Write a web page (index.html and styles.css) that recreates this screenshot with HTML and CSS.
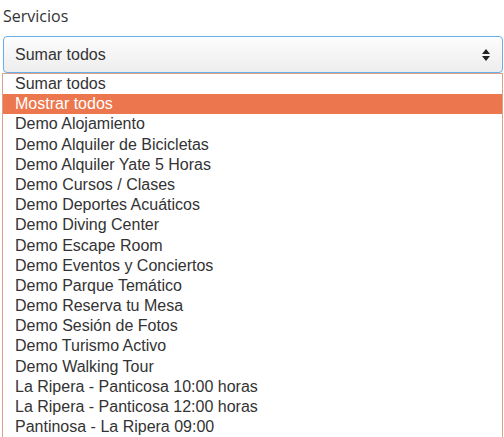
FILE: index.html
```html
<!DOCTYPE html>
<html lang="es">
<head>
<meta charset="utf-8">
<title>Servicios</title>
<link rel="stylesheet" href="styles.css">
</head>
<body>
<div class="field">
  <label class="label">Servicios</label>
  <div class="select">
    <span class="value">Sumar todos</span>
    <svg class="arrows" width="8" height="12" viewBox="0 0 8 12"><path d="M4 0 L8 5 H0 Z M0 7 H8 L4 12 Z" fill="#222"/></svg>
  </div>
  <ul class="options">
    <li>Sumar todos</li>
    <li class="active">Mostrar todos</li>
    <li>Demo Alojamiento</li>
    <li>Demo Alquiler de Bicicletas</li>
    <li>Demo Alquiler Yate 5 Horas</li>
    <li>Demo Cursos / Clases</li>
    <li>Demo Deportes Acuáticos</li>
    <li>Demo Diving Center</li>
    <li>Demo Escape Room</li>
    <li>Demo Eventos y Conciertos</li>
    <li>Demo Parque Temático</li>
    <li>Demo Reserva tu Mesa</li>
    <li>Demo Sesión de Fotos</li>
    <li>Demo Turismo Activo</li>
    <li>Demo Walking Tour</li>
    <li>La Ripera - Panticosa 10:00 horas</li>
    <li>La Ripera - Panticosa 12:00 horas</li>
    <li>Pantinosa - La Ripera 09:00</li>
  </ul>
</div>
</body>
</html>
```
FILE: styles.css
```css
html, body {
  margin: 0;
  padding: 0;
  background: #fff;
  overflow: hidden;
}
.field {
  padding: 0 1px 0 2px;
  width: 501px;
}
.label {
  display: block;
  font-family: "Open Sans", sans-serif;
  font-size: 16px;
  line-height: 20px;
  color: #333;
  padding: 6px 0 0 1px;
  height: 30px;
}
.select {
  box-sizing: border-box;
  margin-left: 1px;
  width: 500px;
  height: 37px;
  border: 1px solid #66afe9;
  border-radius: 4px;
  background: linear-gradient(#fdfdfd, #ededed);
  display: flex;
  align-items: center;
  justify-content: space-between;
  padding: 0 12px 0 11px;
  font-family: "Liberation Sans", Arial, sans-serif;
  font-size: 16px;
  color: #333;
}
.value {
  padding-top: 1px;
}
.arrows {
  display: block;
}
.options {
  list-style: none;
  margin: 0;
  padding: 0;
  width: 501px;
  box-sizing: border-box;
  border: 1px solid #dc9f88;
  border-bottom: none;
  font-family: "Liberation Sans", Arial, sans-serif;
  font-size: 16px;
  color: #333;
}
.options li {
  height: 20.2px;
  line-height: 20px;
  padding-left: 12px;
  white-space: nowrap;
}
.options li.active {
  background: #ec764e;
  color: #fff;
}
```
